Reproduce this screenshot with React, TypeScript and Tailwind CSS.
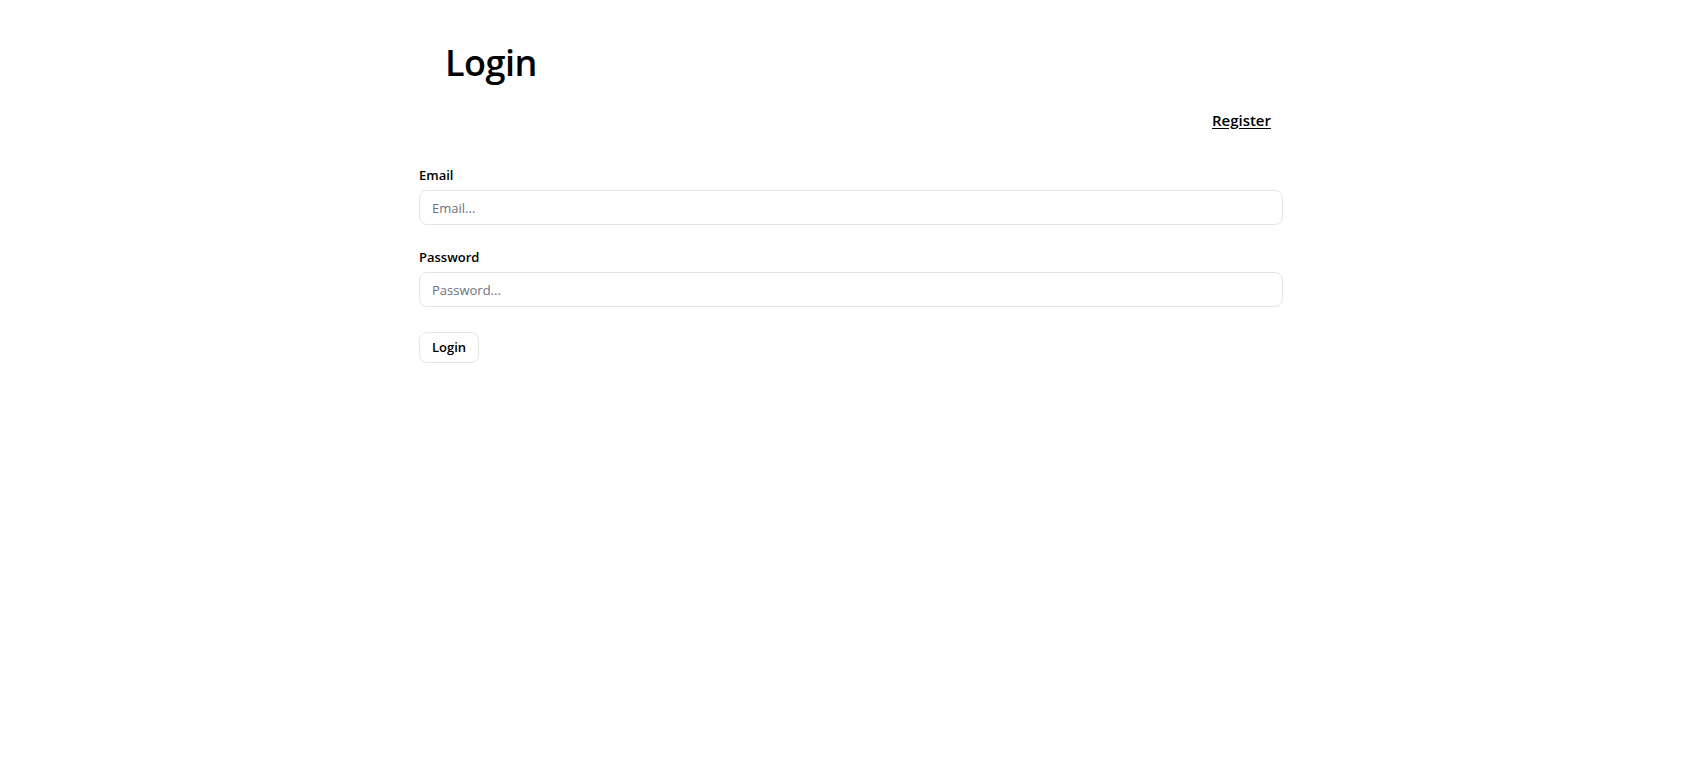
export default function App() {
  return (
    <div className="min-h-screen bg-white text-black font-['Open_Sans',sans-serif]">
      <div className="w-[864px] mx-auto">
        <header className="pt-[39px]">
          <h1 className="pl-[26px] text-[36px] leading-[48px] font-semibold tracking-[-0.5px]">Login</h1>
          <nav className="flex justify-end pr-[12px] mt-[21px]">
            <a href="#" className="text-[15px] leading-[24px] font-semibold underline underline-offset-2">
              Register
            </a>
          </nav>
        </header>

        <form className="mt-[33px] flex flex-col" onSubmit={(e) => e.preventDefault()}>
          <label className="text-[13px] leading-[20px] font-semibold">Email</label>
          <input
            type="email"
            placeholder="Email..."
            className="mt-[5px] h-[35px] w-full rounded-lg border border-[#e4e4e7] px-[12px] text-[13px] placeholder:text-[#6b7280] outline-none"
          />

          <label className="mt-[22px] text-[13px] leading-[20px] font-semibold">Password</label>
          <input
            type="password"
            placeholder="Password..."
            className="mt-[5px] h-[35px] w-full rounded-lg border border-[#e4e4e7] px-[12px] text-[13px] placeholder:text-[#6b7280] outline-none"
          />

          <div className="mt-[25px]">
            <button
              type="submit"
              className="h-[31px] w-[60px] rounded-lg border border-[#e4e4e7] bg-white text-[13px] font-semibold"
            >
              Login
            </button>
          </div>
        </form>
      </div>
    </div>
  );
}
